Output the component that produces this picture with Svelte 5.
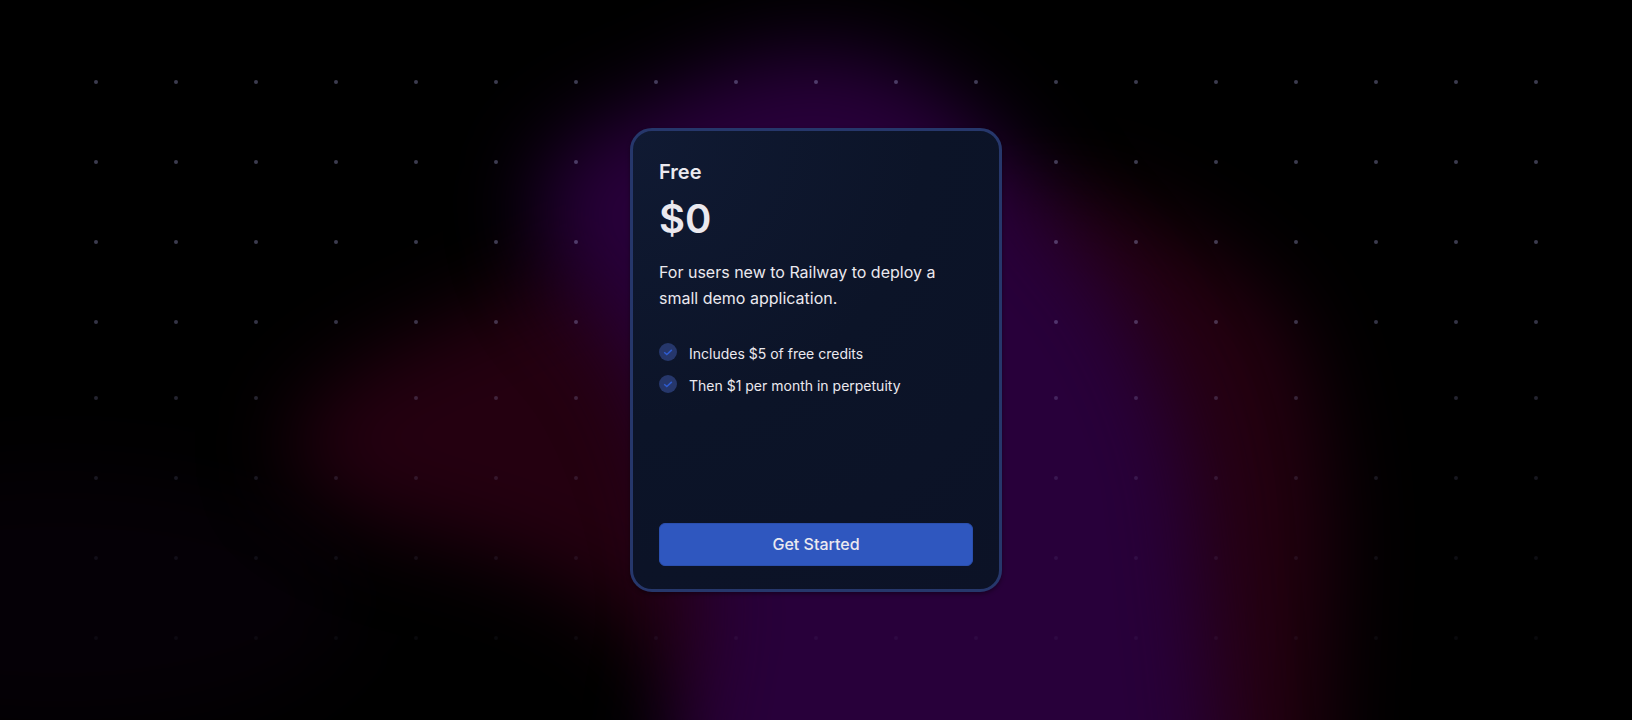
<script>
  const plan = {
    name: 'Free',
    price: '$0',
    description: 'For users new to Railway to deploy a small demo application.',
    features: ['Includes $5 of free credits', 'Then $1 per month in perpetuity']
  };

  // each row of the dot grid fades out a bit more towards the bottom
  const columns = Array.from({ length: 19 }, (_, i) => 96 + i * 80);
  const rows = [
    { y: 82, opacity: 0.33 },
    { y: 162, opacity: 0.33 },
    { y: 242, opacity: 0.33 },
    { y: 322, opacity: 0.29 },
    { y: 398, opacity: 0.2 },
    { y: 478, opacity: 0.13 },
    { y: 558, opacity: 0.08 },
    { y: 638, opacity: 0.05 }
  ];

  const isHidden = (x, y) => y === 398 && (x === 336 || x === 1376);
</script>

<main>
  <svg class="backdrop" viewBox="0 0 1632 720" preserveAspectRatio="xMidYMid slice" aria-hidden="true">
    <defs>
      <filter id="soft" x="-30%" y="-30%" width="160%" height="160%" color-interpolation-filters="sRGB">
        <feGaussianBlur stdDeviation="42" />
      </filter>
    </defs>

    <ellipse cx="60" cy="600" rx="300" ry="130" fill="#050006" filter="url(#soft)" />
    <path
      filter="url(#soft)"
      fill="#240010"
      d="M600 250 L1080 190 Q1210 230 1290 320 Q1340 440 1330 600 L1320 860 L760 860 Q700 690 620 620 Q540 560 400 530 Q270 480 290 430 Q330 370 430 330 Q520 290 600 250 Z"
    />
    <path
      filter="url(#soft)"
      fill="#28003a"
      d="M535 190 Q560 130 650 105 Q730 55 820 48 Q900 58 950 100 Q1020 150 1050 220 Q1150 310 1190 480 L1230 860 L670 860 Q670 740 700 630 Q690 450 610 330 Q540 270 535 190 Z"
    />

    {#each rows as row}
      {#each columns as x}
        {#if !isHidden(x, row.y)}
          <circle cx={x} cy={row.y} r="2" fill="#b4b4f0" opacity={row.opacity} />
        {/if}
      {/each}
    {/each}
  </svg>

  <section class="card">
    <h2>{plan.name}</h2>
    <p class="price">{plan.price}</p>
    <p class="description">{plan.description}</p>

    <ul>
      {#each plan.features as feature}
        <li>
          <svg class="check" viewBox="0 0 18 18" aria-hidden="true">
            <circle cx="9" cy="9" r="9" fill="#26376b" />
            <path d="M5.2 9.3 L7.8 11.6 L12.8 6.9" fill="none" stroke="#2f5cd0" stroke-width="1.5" />
          </svg>
          <span>{feature}</span>
        </li>
      {/each}
    </ul>

    <button type="button">Get Started</button>
  </section>
</main>

<style>
  :global(body) {
    margin: 0;
    background: #000;
  }

  main {
    position: relative;
    display: flex;
    align-items: center;
    justify-content: center;
    min-height: 100vh;
    overflow: hidden;
    font-family: Inter, "Liberation Sans", sans-serif;
    color: #ebe9ef;
  }

  /* glow and dots sit behind the card */
  .backdrop {
    position: absolute;
    inset: 0;
    width: 100%;
    height: 100%;
  }

  .card {
    position: relative;
    display: flex;
    flex-direction: column;
    box-sizing: border-box;
    width: 100%;
    max-width: 372px;
    min-height: 464px;
    padding: 26px 26px 23px;
    border: 3px solid #26376b;
    border-radius: 22px;
    background: radial-gradient(circle at 0 0, #101a33 0, #0c1428 50%, #0c1226 100%);
    box-shadow: 0 2px 4px rgba(0, 0, 0, 0.4);
  }

  h2 {
    margin: 0 0 8px;
    font-size: 20px;
    font-weight: 600;
    line-height: 30px;
  }

  .price {
    margin: 0 0 16px;
    font-size: 40px;
    font-weight: 600;
    line-height: 48px;
  }

  .description {
    margin: 0 0 32px;
    font-size: 16px;
    line-height: 26px;
  }

  ul {
    display: flex;
    flex-direction: column;
    gap: 10px;
    margin: 0 0 32px;
    padding: 0;
    list-style: none;
  }

  li {
    display: flex;
    align-items: flex-start;
    gap: 12px;
    font-size: 14px;
    line-height: 22px;
  }

  .check {
    flex: none;
    width: 18px;
    height: 18px;
  }

  button {
    margin-top: auto;
    padding: 0 16px;
    border: 1px solid #2b4fae;
    border-radius: 6px;
    background: #2f57bf;
    color: inherit;
    font-family: inherit;
    font-size: 16px;
    font-weight: 500;
    line-height: 41px;
    cursor: pointer;
  }
</style>
